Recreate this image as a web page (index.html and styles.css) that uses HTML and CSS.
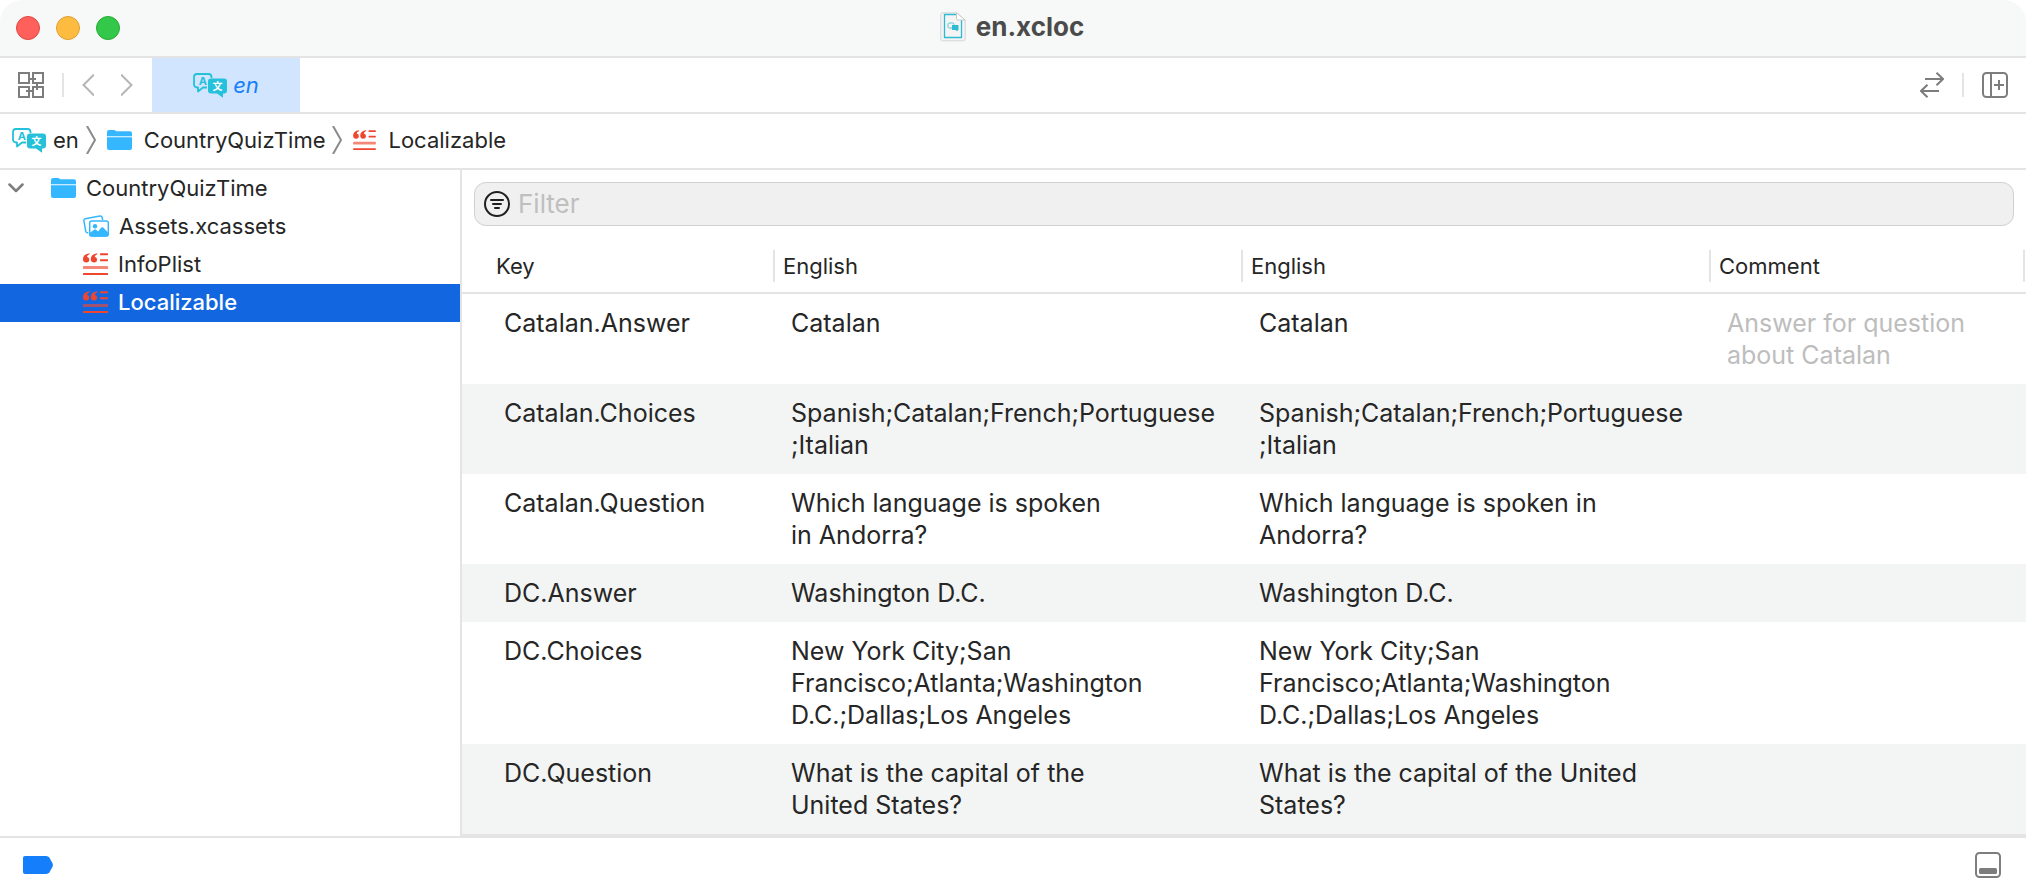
FILE: index.html
```html
<!DOCTYPE html>
<html lang="en">
<head>
<meta charset="utf-8">
<title>en.xcloc</title>
<link rel="stylesheet" href="styles.css">
</head>
<body>
<svg class="sprite" aria-hidden="true">
  <symbol id="i-bubbles" viewBox="0 0 34 25">
    <path d="M14 14.500H10L5 18.500V14.500H4A3 3 0 0 1 1 11.500V4A3 3 0 0 1 4 1H15.500A3 3 0 0 1 18.500 4V5" fill="none" stroke="currentColor" stroke-width="1.800" stroke-linejoin="round"/>
    <path d="M18 5.500H31A3 3 0 0 1 34 8.500V17.500A3 3 0 0 1 31 20.500H30V24.800L24 20.500H18A3 3 0 0 1 15 17.500V8.500A3 3 0 0 1 18 5.500Z" fill="currentColor"/>
  </symbol>
  <symbol id="i-folder" viewBox="0 0 25 20">
    <path d="M0 6V2Q0 0 2 0H7Q8 0 8.700 .7L9.300 1.300H23Q25 1.300 25 3.300V6Z" fill="#34b7ff"/>
    <path d="M0 6H25V7.300H0Z" fill="#c5eaff"/>
    <path d="M0 7.300H25V18Q25 20 23 20H2Q0 20 0 18Z" fill="#34b7ff"/>
  </symbol>
  <symbol id="i-strings" viewBox="0 0 25 22">
    <g fill="#ef4630">
      <path d="M6.500 .3Q0 1 0 6.300Q.1 9.600 3.300 9.600Q6.300 9.400 6.300 6.600Q6.200 4.200 3.900 3.800Q4.300 2 6.600 1.200Z"/>
      <path d="M14.300 .3Q7.800 1 7.800 6.300Q7.900 9.600 11.100 9.600Q14.100 9.400 14.100 6.600Q14 4.200 11.700 3.800Q12.100 2 14.400 1.200Z"/>
      <rect x="17" y=".3" width="8" height="2" rx=".5"/>
      <rect x="17" y="6.300" width="8" height="2" rx=".5"/>
      <rect x="0" y="20" width="25" height="2" rx=".5"/>
    </g>
    <rect x="0" y="13" width="25" height="3" rx=".5" fill="#ef4630" opacity=".65"/>
  </symbol>
  <symbol id="i-assets" viewBox="0 0 26 22">
    <path d="M4.600 17.800Q3 17.800 2.700 16.200L.9 5.800Q.7 4 2.400 3.700L16.800 1Q18.800 .8 19.200 2.500L19.500 4.300" fill="none" stroke="#34b7ff" stroke-width="1.500" stroke-linecap="round"/>
    <rect x="6.700" y="6" width="18.600" height="15" rx="2" fill="#fff" stroke="#34b7ff" stroke-width="1.500"/>
    <path d="M6.500 18L11.500 14.500Q12.300 14 13 14.700L15 16.500L18.300 12.600Q19.200 11.700 20.200 12.600L25.500 18V20Q25.500 21.700 23.700 21.700H8.300Q6.500 21.700 6.500 20Z" fill="#34b7ff"/>
    <circle cx="12" cy="11.200" r="2.200" fill="#34b7ff"/>
  </symbol>
  <symbol id="i-sep" viewBox="0 0 10 28">
    <path d="M1 0L9 14L1 28" fill="none" stroke="#8a8a8a" stroke-width="2"/>
  </symbol>
</svg>
<div class="window">
  <header class="titlebar">
    <div class="lights">
      <button class="light red" aria-label="Close"></button>
      <button class="light amber" aria-label="Minimize"></button>
      <button class="light green" aria-label="Zoom"></button>
    </div>
    <h1 class="title">
      <svg class="doc" width="26" height="30" viewBox="0 0 26 30" aria-hidden="true">
        <path d="M2.500 .8H16.500L25.200 8V27Q25.200 28.800 23.400 28.800H2.500Q.8 28.800 .8 27V2.500Q.8 .8 2.500 .8Z" fill="#f4f4f4" stroke="#d4d6d6" stroke-width="1"/>
        <path d="M16 2.500H4.500V25.500H21.500V8" fill="none" stroke="#2dbbd3" stroke-width="1.300"/>
        <path d="M16.500 .8V6.500Q16.500 8 18 8H25.200Z" fill="#fff" stroke="#c6c8c8" stroke-width="1"/>
        <rect x="8" y="11" width="6" height="5" rx="1.500" fill="none" stroke="#55c5d8"/>
        <path d="M12 13H18Q18.500 13 18.500 13.500V17.500Q18.500 18 18 18H17.500V19.500L15.500 18H12.500Q12 18 12 17.500Z" fill="#2dbbd3"/>
      </svg>
      <span>en.xcloc</span>
    </h1>
    <div></div>
  </header>
  <div class="tabbar">
    <div class="tools-left">
      <button class="tool" aria-label="Related items">
        <svg width="26" height="26" viewBox="0 0 26 26" fill="none" stroke="#7d7d7d" stroke-width="2">
          <rect x="1" y="1" width="10" height="10"/><rect x="15" y="1" width="10" height="10"/>
          <rect x="1" y="15" width="10" height="10"/><rect x="15" y="15" width="10" height="10"/>
          <path d="M11 7H18M19 11V18M8 19H15"/>
        </svg>
      </button>
      <span class="rule"></span>
      <button class="tool" aria-label="Back">
        <svg width="12" height="22" viewBox="0 0 12 22" fill="none" stroke="#b5b5b5" stroke-width="2"><path d="M12 .5L1.500 11L12 21.500"/></svg>
      </button>
      <button class="tool forward" aria-label="Forward">
        <svg width="12" height="22" viewBox="0 0 12 22" fill="none" stroke="#b5b5b5" stroke-width="2"><path d="M0 .5L10.500 11L0 21.500"/></svg>
      </button>
    </div>
    <button class="tab"><svg class="loc" viewBox="0 0 34 25" aria-hidden="true"><use href="#i-bubbles" width="34" height="25"/><text x="9.800" y="12" class="loc-a">A</text><text x="24.500" y="17" class="loc-b">文</text></svg>en</button>
    <div class="tools-right">
      <button class="tool" aria-label="Review changes">
        <svg width="24" height="26" viewBox="0 0 24 26" fill="none" stroke="#7d7d7d" stroke-width="2"><path d="M5 7H23M16.500 .8L23 7L16.500 13.200M19 19H1M7.500 12.800L1 19L7.500 25.200"/></svg>
      </button>
      <span class="rule"></span>
      <button class="tool" aria-label="Add editor">
        <svg width="26" height="26" viewBox="0 0 26 26" fill="none" stroke="#7d7d7d" stroke-width="2"><rect x="1" y="1" width="24" height="24" rx="3.500"/><path d="M9 1V25M12 13H22M17 8V18"/></svg>
      </button>
    </div>
  </div>
  <nav class="crumbs" aria-label="Path">
    <a href="#en" class="crumb first"><svg class="loc" viewBox="0 0 34 25" aria-hidden="true"><use href="#i-bubbles" width="34" height="25"/><text x="9.800" y="12" class="loc-a">A</text><text x="24.500" y="17" class="loc-b">文</text></svg>en</a>
    <svg class="sep"><use href="#i-sep"/></svg>
    <a href="#quiz" class="crumb"><svg class="folder"><use href="#i-folder"/></svg>CountryQuizTime</a>
    <svg class="sep"><use href="#i-sep"/></svg>
    <a href="#loc" class="crumb"><svg class="strings small"><use href="#i-strings"/></svg>Localizable</a>
  </nav>
  <main class="body">
    <nav class="sidebar" aria-label="Files">
      <button class="item root" aria-expanded="true">
        <svg class="twist" width="16" height="10" viewBox="0 0 16 10" fill="none" stroke="#7d7d7d" stroke-width="2.500" stroke-linecap="round" stroke-linejoin="round"><path d="M1.500 1.500L8 8L14.500 1.500"/></svg>
        <svg class="folder"><use href="#i-folder"/></svg>CountryQuizTime
      </button>
      <button class="item"><svg class="assets"><use href="#i-assets"/></svg>Assets.xcassets</button>
      <button class="item"><svg class="strings"><use href="#i-strings"/></svg>InfoPlist</button>
      <button class="item selected" aria-current="true"><svg class="strings"><use href="#i-strings"/></svg>Localizable</button>
    </nav>
    <section class="editor">
      <label class="filter">
        <svg width="26" height="26" viewBox="0 0 26 26" fill="none" stroke="#1f1f1f" stroke-width="2" stroke-linecap="round"><circle cx="13" cy="13" r="12"/><path d="M7 9H19M9 13H17M11 17H15"/></svg>
        <input type="text" placeholder="Filter" aria-label="Filter">
      </label>
      <table class="strings-table">
        <colgroup><col class="c-key"><col class="c-lang"><col class="c-lang"><col></colgroup>
        <thead>
          <tr><th><span>Key</span></th><th><span>English</span></th><th><span>English</span></th><th><span class="last">Comment</span></th></tr>
        </thead>
        <tbody>
          <tr><td>Catalan.Answer</td><td>Catalan</td><td>Catalan</td><td class="note">Answer for question about Catalan</td></tr>
          <tr><td>Catalan.Choices</td><td>Spanish;Catalan;French;Portuguese<wbr>;Italian</td><td>Spanish;Catalan;French;Portuguese<wbr>;Italian</td><td></td></tr>
          <tr><td>Catalan.Question</td><td>Which language is spoken in&nbsp;Andorra?</td><td>Which language is spoken in Andorra?</td><td></td></tr>
          <tr><td>DC.Answer</td><td>Washington D.C.</td><td>Washington D.C.</td><td></td></tr>
          <tr><td>DC.Choices</td><td>New York City;San Francisco;Atlanta;Washington D.C.;Dallas;Los Angeles</td><td>New York City;San Francisco;Atlanta;Washington D.C.;Dallas;Los Angeles</td><td></td></tr>
          <tr><td>DC.Question</td><td>What is the capital of the United&nbsp;States?</td><td>What is the capital of the United States?</td><td></td></tr>
        </tbody>
      </table>
    </section>
  </main>
  <footer class="statusbar">
    <button class="tool" aria-label="Breakpoints">
      <svg width="30" height="18" viewBox="0 0 30 18"><path d="M2 0H23Q25.300 0 26.500 1.800L29.600 7.600Q30.200 9 29.600 10.400L26.500 16.200Q25.300 18 23 18H2Q0 18 0 16V2Q0 0 2 0Z" fill="#157efb"/></svg>
    </button>
    <button class="tool" aria-label="Toggle bottom panel">
      <svg width="26" height="26" viewBox="0 0 26 26"><rect x="1" y="1" width="24" height="24" rx="3.500" fill="none" stroke="#7d7d7d" stroke-width="2"/><rect x="4" y="16" width="18" height="6" rx="1.500" fill="#7d7d7d"/></svg>
    </button>
  </footer>
</div>
</body>
</html>
```
FILE: styles.css
```css
* { box-sizing: border-box; }

body {
  margin: 0;
  background: #fff;
  color: #262626;
  font: 22px/28px Inter, "Liberation Sans", sans-serif;
}

button {
  margin: 0;
  padding: 0;
  border: 0;
  background: none;
  color: inherit;
  font: inherit;
}

svg { display: block; flex: none; }
.sprite { width: 0; height: 0; position: absolute; }

.loc-a { font: 700 11px Inter, sans-serif; text-anchor: middle; fill: currentColor; }
.loc-b { font: 700 10px "Noto Sans CJK SC", sans-serif; text-anchor: middle; fill: #fff; }

.loc { width: 34px; height: 25px; color: #25c0da; }
.folder { width: 25px; height: 20px; }
.strings { width: 25px; height: 22px; }
.strings.small { width: 23px; height: 20px; }
.assets { width: 26px; height: 22px; }
.sep { width: 10px; height: 28px; }

.window {
  display: flex;
  flex-direction: column;
  min-height: 100vh;
}

.titlebar {
  display: grid;
  grid-template-columns: 1fr auto 1fr;
  align-items: center;
  height: 58px;
  padding: 0 16px;
  border-bottom: 2px solid #e4e4e4;
  border-radius: 22px 22px 0 0;
  background: #f7f9f8;
}

.lights { display: flex; gap: 16px; }
.light { width: 24px; height: 24px; border: 1px solid; border-radius: 50%; }
.red { background: #ff605c; border-color: #e2463f; }
.amber { background: #fdbc40; border-color: #dea035; }
.green { background: #34c84a; border-color: #26a934; }

.title {
  display: flex;
  align-items: center;
  gap: 10px;
  margin: 0;
  padding: 0 2px 2px 0;
  color: #4b4b4b;
  font-size: 26px;
  font-weight: 700;
}

.tabbar {
  display: flex;
  height: 56px;
  border-bottom: 2px solid #e4e4e4;
}

.tool { display: flex; align-items: center; }
.rule { width: 2px; height: 24px; background: #e4e4e4; }

.tools-left,
.tools-right { display: flex; align-items: center; gap: 18px; }
.tools-left { width: 152px; padding-left: 18px; }
.tools-right { margin-left: auto; padding-right: 18px; }
.forward { margin-left: 9px; }

.tab {
  display: flex;
  align-items: center;
  justify-content: center;
  gap: 6px;
  width: 148px;
  background: #d1e5fe;
  color: #157efb;
  font-style: italic;
}

.crumbs {
  display: flex;
  align-items: center;
  gap: 7px;
  height: 56px;
  padding: 0 12px 2px;
  border-bottom: 2px solid #e4e4e4;
}

.crumb {
  display: flex;
  align-items: center;
  gap: 12px;
  margin-left: 4px;
  color: inherit;
  text-decoration: none;
}
.crumb.first { gap: 7px; margin-left: 0; }

.body { display: flex; flex: 1; }

.sidebar {
  flex: none;
  width: 462px;
  border-right: 2px solid #e4e4e4;
}

.item {
  display: flex;
  align-items: center;
  gap: 10px;
  width: 100%;
  height: 38px;
  padding: 0 0 2px 83px;
  text-align: left;
}
.item.root { padding-left: 8px; }
.twist { margin-right: 17px; }
.item.selected { background: #1267e0; color: #fff; font-weight: 500; }

.editor {
  flex: 1;
  min-width: 0;
  border-bottom: 2px solid #e4e4e4;
}

.filter {
  display: flex;
  align-items: center;
  gap: 8px;
  height: 44px;
  margin: 12px 12px 14px;
  padding: 0 9px;
  border: 1px solid #d0d0d0;
  border-radius: 12px;
  background: #f0f0f0;
}

.filter input {
  flex: 1;
  min-width: 0;
  padding: 0;
  border: 0;
  outline: 0;
  background: none;
  color: inherit;
  font: inherit;
  font-size: 26px;
}
.filter input::placeholder { color: #bfbfbf; opacity: 1; }

.strings-table {
  width: 100%;
  border-spacing: 0;
  table-layout: fixed;
  font-size: 25px;
  line-height: 32px;
}
.c-key { width: 311px; }
.c-lang { width: 468px; }

.strings-table th {
  height: 54px;
  padding: 0;
  border-bottom: 2px solid #e4e4e4;
  font-size: 22px;
  font-weight: 400;
  text-align: left;
}
.strings-table th span {
  display: block;
  padding-left: 8px;
  border-left: 2px solid #e4e4e4;
}
.strings-table th:first-child span { padding-left: 34px; border-left: 0; }
.strings-table th .last { margin-right: 1px; border-right: 2px solid #e4e4e4; }

.strings-table td { padding: 13px 8px 13px 18px; vertical-align: top; }
.strings-table td:first-child { padding-left: 42px; }
.strings-table tbody tr:nth-child(even) { background: #f3f5f4; }
.strings-table .note { color: #bdbdbd; }

.statusbar {
  display: flex;
  align-items: center;
  justify-content: space-between;
  height: 56px;
  padding: 0 25px 0 23px;
  border-top: 2px solid #e4e4e4;
}
```
